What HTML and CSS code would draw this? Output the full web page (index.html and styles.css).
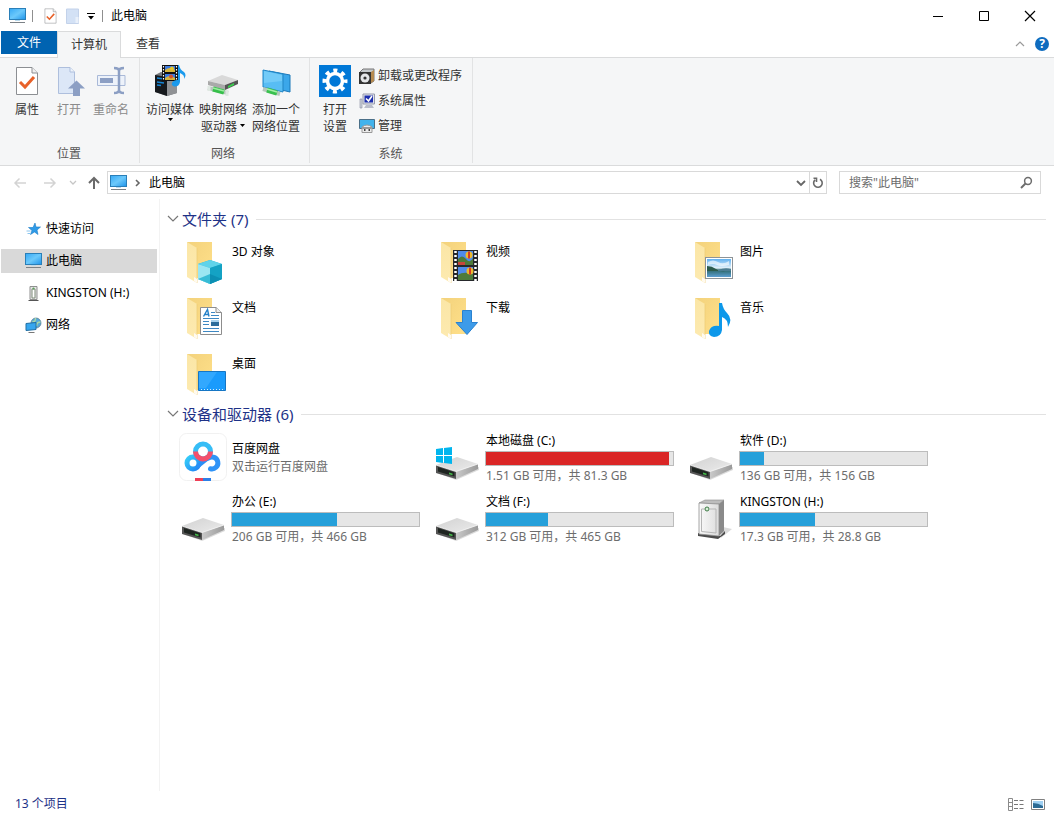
FILE: index.html
```html
<!DOCTYPE html>
<html lang="zh-CN">
<head>
<meta charset="utf-8">
<title>此电脑</title>
<link rel="stylesheet" href="styles.css">
</head>
<body>
<svg class="defs" aria-hidden="true">
  <defs>
    <linearGradient id="screen" x1="0" y1="0" x2="1" y2="1"><stop offset="0" stop-color="#35a8f5"/><stop offset=".5" stop-color="#6cc9fb"/><stop offset="1" stop-color="#1d93ea"/></linearGradient>
    <linearGradient id="back" x1="0" y1="0" x2="1" y2="1"><stop offset="0" stop-color="#f3d27c"/><stop offset="1" stop-color="#ffe08a"/></linearGradient>
    <linearGradient id="flap" x1="0" y1="0" x2="0" y2="1"><stop offset="0" stop-color="#fbe6a6"/><stop offset="1" stop-color="#fdeab0"/></linearGradient>
    <linearGradient id="metal" x1="0" y1="0" x2="1" y2="1"><stop offset="0" stop-color="#d2d2d2"/><stop offset="1" stop-color="#ebebeb"/></linearGradient>
    <linearGradient id="side" x1="0" y1="0" x2="1" y2="0"><stop offset="0" stop-color="#c9c9c9"/><stop offset="1" stop-color="#9a9a9a"/></linearGradient>
    <linearGradient id="sky" x1="0" y1="0" x2="0" y2="1"><stop offset="0" stop-color="#5fb0ee"/><stop offset=".5" stop-color="#e3f2fb"/><stop offset=".62" stop-color="#2f6a6e"/><stop offset="1" stop-color="#5d9fd2"/></linearGradient>
    <linearGradient id="tower" x1="0" y1="0" x2="1" y2="0"><stop offset="0" stop-color="#fafafa"/><stop offset="1" stop-color="#dcdcdc"/></linearGradient>
    <linearGradient id="ringL" x1="0" y1="0" x2="1" y2="1"><stop offset="0" stop-color="#35cdf8"/><stop offset="1" stop-color="#2286f5"/></linearGradient>
  </defs>
  <symbol id="pc" viewBox="0 0 17 16">
    <rect x=".5" y=".5" width="16" height="11" fill="url(#screen)" stroke="#2a7fb8"/>
    <path d="M6 12.500h5" stroke="#b9d9ec"/><path d="M1 14.500H16" stroke="#7b8186"/>
  </symbol>
  <symbol id="folder" viewBox="0 0 48 48">
    <path d="M8 4H33V40H14Z" fill="url(#back)"/>
    <path d="M8 4L18 10V45L8 39Z" fill="url(#flap)"/>
    <path d="M18 10V45" stroke="#eccb74" stroke-width=".7"/>
    <path d="M15 39l3 2v4l-3-2z" fill="#fffaf0"/>
  </symbol>
  <symbol id="drive" viewBox="0 0 48 48">
    <path d="M4 40L23 47L46 37V34Z" fill="#b9b9b9" opacity=".5"/>
    <path d="M3 32L24 24L45 31L23 38.500Z" fill="url(#metal)"/>
    <path d="M23 38.500L45 31V36L23 46Z" fill="url(#side)"/>
    <path d="M3 32L23 38.500V46L3 40Z" fill="#555"/>
    <path d="M5 34L21.500 39.300V43.500L5 38.500Z" fill="#1f2521"/>
    <path d="M16 39.500l3.500 1v1.800l-3.500-1z" fill="#44b649"/>
    <path d="M3 32L23 38.500L45 31" fill="none" stroke="#f7f7f7" stroke-width=".8"/>
  </symbol>
  <symbol id="picture" viewBox="0 0 28 22">
    <rect x=".5" y=".5" width="27" height="21" fill="#fff" stroke="#8d9397"/>
    <rect x="2" y="2" width="24" height="18" fill="url(#sky)"/>
    <path d="M2 9Q7 9 11 12T20 14L2 14Z" fill="#2c5b4c"/><path d="M13 13Q20 10 26 12V14H13Z" fill="#4c7d92"/>
    <path d="M3 5q5-3 10 0t11-1v4q-8 2-12 0t-9 0z" fill="#fff" opacity=".6"/>
  </symbol>
  <symbol id="propdoc" viewBox="0 0 24 30">
    <path d="M1.500 1.500H17L22.500 7V28.500H1.500Z" fill="#fff" stroke="#8c8f93"/>
    <path d="M17 1.500V7H22.500" fill="#f0f0f0" stroke="#8c8f93"/>
    <path d="M5 16L10 21L19 11" fill="none" stroke="#e8622a" stroke-width="3"/>
  </symbol>
</svg>

<header class="titlebar">
  <svg class="pc" width="17" height="16"><use href="#pc"/></svg>
  <span class="sep"></span>
  <button class="quick" aria-label="属性"><svg width="13" height="16"><use href="#propdoc"/></svg></button>
  <button class="quick" aria-label="新建文件夹"><svg width="14" height="16" viewBox="0 0 14 16"><path d="M.5 1H12.500V15.500H.5Z" fill="#d3e1f5" stroke="#c3d2ea"/><path d="M9.500 9h3v6h-3z" fill="#e9f0fa"/></svg></button>
  <button class="quick" aria-label="自定义快速访问工具栏"><svg width="8" height="8" viewBox="0 0 8 8"><path d="M0 1.500H8" stroke="#000"/><path d="M1 4H7L4 7.500Z"/></svg></button>
  <span class="sep"></span>
  <h1 class="title">此电脑</h1>
  <div class="controls">
    <button aria-label="最小化"><svg width="12" height="12" viewBox="0 0 12 12"><path d="M1 6.500H11" stroke="#000"/></svg></button>
    <button aria-label="最大化"><svg width="12" height="12" viewBox="0 0 12 12"><path d="M1.500 1.500H10.500V10.500H1.500Z" fill="none" stroke="#000"/></svg></button>
    <button aria-label="关闭"><svg width="12" height="12" viewBox="0 0 12 12"><path d="M1 1L11 11M11 1L1 11" stroke="#000" stroke-width="1.200"/></svg></button>
  </div>
</header>

<nav class="tabs">
  <button class="tab file">文件</button>
  <button class="tab active">计算机</button>
  <button class="tab">查看</button>
  <div class="tab-tools">
    <button aria-label="最小化功能区"><svg width="10" height="8" viewBox="0 0 10 8"><path d="M1 6L5 2L9 6" fill="none" stroke="#9a9a9a" stroke-width="1.200"/></svg></button>
    <button class="help" aria-label="帮助">?</button>
  </div>
</nav>

<section class="ribbon">
  <div class="group location">
    <div class="tools">
      <button class="big"><svg width="32" height="32" viewBox="0 0 32 32"><use href="#propdoc" x="4" y="1" width="24" height="30"/></svg>属性</button>
      <button class="big" disabled><svg width="32" height="32" viewBox="0 0 32 32"><path d="M5.500 2.500H17L21.500 7V28.500H5.500Z" fill="#dce7f7" stroke="#aebfdd"/><path d="M17 2.500V7H21.500" fill="#edf3fb" stroke="#aebfdd"/><path d="M23.500 15.500L32 23.500H27V31H20V23.500H15Z" fill="#8c9fc4"/></svg>打开</button>
      <button class="big" disabled><svg width="32" height="32" viewBox="0 0 32 32"><path d="M2.500 10.500H30V20.500H2.500Z" fill="#edf2fa" stroke="#a9b9d8"/><path d="M5 13H18V18H5Z" fill="#8c9fc4"/><path d="M19 3q5 0 5 3V25q0 3-5 3M29 3q-5 0-5 3V25q0 3 5 3" fill="none" stroke="#8c9fc4" stroke-width="2.500"/></svg>重命名</button>
    </div>
    <div class="caption">位置</div>
  </div>
  <div class="group network">
    <div class="tools">
      <button class="big"><svg width="34" height="32" viewBox="0 0 34 32"><path d="M2 10L8 7L24 9V28L14 31L2 27Z" fill="#77797c"/><path d="M2 10L14 12V31L2 27Z" fill="#16191d"/><path d="M14 12L24 9V28L14 31Z" fill="#909295"/><path d="M4 13l7 1M4 17l7 1M4 20l4 .6" stroke="#1687d8" stroke-width="1.500"/><path d="M9 0H25V16H9Z" fill="#111"/><path d="M12 1H22V7H12ZM12 9H22V15H12Z" fill="#3e7ce0"/><path d="M12 5q5-4 10 0v2H12zM12 13q5-4 10 0v2H12z" fill="#d5b43c"/><circle cx="19" cy="3.500" r="2" fill="#e7c72c"/><circle cx="18" cy="11.500" r="2" fill="#d7532a"/><path d="M10.500 1V16M23.500 1V16" stroke="#fff" stroke-width="1.200" stroke-dasharray="1.500 1.500"/><path d="M26 0q1 5 5 7 3 3 0 7 1-4-4-6V17q-1 5-6 4.500-4-2-1-5 2-2 5-1.500V0Z" fill="#1a9aed"/></svg>访问媒体<svg class="drop" width="5" height="3" viewBox="0 0 5 3"><path d="M0 0H5L2.500 3Z"/></svg></button>
      <button class="big mid"><svg width="34" height="32" viewBox="0 0 34 32"><path d="M2 16L16 10L32 15L19 20Z" fill="#d9d9d9"/><path d="M2 16L19 20V25L2 20Z" fill="#a9a9a9"/><path d="M19 20L32 15V19L19 25Z" fill="#555"/><path d="M22 21l6-3v2l-6 3z" fill="#37d04c"/><path d="M2 23L22 28" stroke="#b8c4bd" stroke-width="4"/><path d="M7 24L18 27" stroke="#36bf4b" stroke-width="5"/><path d="M7 23L18 26" stroke="#9bed9f" stroke-width="1.500"/><path d="M3 21v5M21 25v6" stroke="#dfe8e2" stroke-width="3"/></svg>映射网络<span>驱动器 <svg class="inline" width="5" height="3" viewBox="0 0 5 3"><path d="M0 0H5L2.500 3Z"/></svg></span></button>
      <button class="big"><svg width="32" height="32" viewBox="0 0 32 32"><path d="M9 6L30 10V27L9 22Z" fill="#3ba7ea" stroke="#1b78b9"/><path d="M3 5L23 9V27L3 22Z" fill="#58bdf4" stroke="#2185c5"/><path d="M4 6L22 10V16L4 18Z" fill="#86d3fa" opacity=".6"/><path d="M3 24L20 29" stroke="#b5c7bb" stroke-width="4"/><path d="M7 25L17 28" stroke="#39c14e" stroke-width="5"/><path d="M7 24L17 27" stroke="#a3efa7" stroke-width="1.500"/></svg>添加一个<span>网络位置</span></button>
    </div>
    <div class="caption">网络</div>
  </div>
  <div class="group system">
    <div class="tools">
      <button class="big"><svg width="32" height="32" viewBox="0 0 32 32"><path d="M0 0H32V32H0Z" fill="#0078d7"/><circle cx="16" cy="16" r="7.500" fill="none" stroke="#fff" stroke-width="3.500"/><circle cx="16" cy="16" r="10.500" fill="none" stroke="#fff" stroke-width="4" stroke-dasharray="4 4.247" stroke-dashoffset="2"/></svg>打开<span>设置</span></button>
      <div class="stack">
        <button class="small"><svg width="16" height="16" viewBox="0 0 16 16"><path d="M1 4L4 1H15V13L12 15Z" fill="#c5c9cc" stroke="#777"/><path d="M12 4l3-2v11l-3 2z" fill="#b58a4f"/><path d="M0 4H12V16H0Z" fill="#333"/><circle cx="6" cy="10" r="4.500" fill="#e4e6e8"/><circle cx="6" cy="10" r="1.600" fill="#333"/></svg>卸载或更改程序</button>
        <button class="small"><svg width="16" height="16" viewBox="0 0 16 16"><path d="M1 6H3V15H1Z" fill="#cfd3dc" stroke="#858ba0" stroke-width=".6"/><path d="M4 1H15.500V11H4Z" fill="#e1e3ea" stroke="#969bad"/><path d="M5.500 2.500H14V9.500H5.500Z" fill="#1d2fae"/><path d="M7 5.500L9.500 8L13 3" fill="none" stroke="#fff" stroke-width="1.600"/><path d="M7 12H13L15 15H5Z" fill="#babecb"/></svg>系统属性</button>
        <button class="small"><svg width="16" height="16" viewBox="0 0 16 16"><path d="M.5 1.500H15.500V10.500H.5Z" fill="#42b3ec" stroke="#4a6f88"/><path d="M3 9Q8 5 13 9V14.500H3Z" fill="#ececec" stroke="#999"/><path d="M3.500 9.500H12.500V10.500H3.500ZM5 11h1.500v2H5zM9.500 11H11v2H9.500z" fill="#444"/></svg>管理</button>
      </div>
    </div>
    <div class="caption">系统</div>
  </div>
</section>

<div class="addressbar">
  <div class="history">
    <button aria-label="后退"><svg width="14" height="12" viewBox="0 0 14 12"><path d="M13 6H2M6.500 1.500L2 6L6.500 10.500" fill="none" stroke="#d3d3d3" stroke-width="1.500"/></svg></button>
    <button aria-label="前进"><svg width="14" height="12" viewBox="0 0 14 12"><path d="M1 6H12M7.500 1.500L12 6L7.500 10.500" fill="none" stroke="#d3d3d3" stroke-width="1.500"/></svg></button>
    <button class="recent" aria-label="最近浏览的位置"><svg width="8" height="6" viewBox="0 0 8 6"><path d="M1 1L4 4L7 1" fill="none" stroke="#c6c6c6" stroke-width="1.300"/></svg></button>
    <button class="up" aria-label="上移"><svg width="12" height="14" viewBox="0 0 12 14"><path d="M6 13V2M1 7L6 2L11 7" fill="none" stroke="#6a6a6a" stroke-width="2"/></svg></button>
  </div>
  <div class="path">
    <svg width="17" height="16"><use href="#pc"/></svg>
    <svg width="6" height="8" viewBox="0 0 6 8"><path d="M1 1L4 4L1 7" fill="none" stroke="#666" stroke-width="1.600"/></svg>
    <button class="crumb">此电脑</button>
    <button class="pick" aria-label="以前的位置"><svg width="10" height="8" viewBox="0 0 10 8"><path d="M1 2L5 6L9 2" fill="none" stroke="#666" stroke-width="1.800"/></svg></button>
    <button class="refresh" aria-label="刷新"><svg width="12" height="12" viewBox="0 0 12 12"><path d="M8 2.200A4.300 4.300 0 1 1 3 2.800M1.500 1.200H4.500V5" fill="none" stroke="#6a6a6a" stroke-width="1.600"/></svg></button>
  </div>
  <div class="search">
    <input type="text" aria-label="搜索" placeholder='搜索"此电脑"'>
    <svg width="13" height="13" viewBox="0 0 13 13"><circle cx="8" cy="5" r="3.400" fill="none" stroke="#6d6d6d" stroke-width="1.500"/><path d="M5.500 7.500L1 12" stroke="#6d6d6d" stroke-width="2"/></svg>
  </div>
</div>

<div class="body">
  <nav class="side">
    <a href="#quick"><svg width="16" height="16" viewBox="0 0 16 16"><path d="M9.500 2l1 4H15L11.500 9 12.500 13.500 9 11 5 13.500 6.500 9.500 3 6.500h4.500z" fill="#2f9be8" stroke="#1a7cc7" stroke-width=".6"/><path d="M1 10h4M2 12.500h3" stroke="#8cc6ef"/></svg>快速访问</a>
    <a href="#pc-root" class="selected"><svg width="17" height="16"><use href="#pc"/></svg>此电脑</a>
    <a href="#kingston"><svg width="16" height="16" viewBox="0 0 16 16"><path d="M4.500 1.500H11.500V14.500H4.500Z" fill="#e6e6e6" stroke="#8f8f8f"/><path d="M6.500 4h3v9h-3z" fill="#fff" stroke="#7d8a78"/><path d="M3 15.500H13" stroke="#555"/><circle cx="8" cy="3.500" r="1" fill="#57a057"/></svg>KINGSTON (H:)</a>
    <a href="#network"><svg width="16" height="16" viewBox="0 0 16 16"><circle cx="10.500" cy="6" r="5" fill="#58a9d8" stroke="#55788e" stroke-width=".7"/><path d="M7 4q3 2 3-3M11 9q0-4 4-4" stroke="#a8d8a8" fill="none" stroke-width="1.500"/><path d="M.5 6.500L10.500 5.500V12.500L.5 13.500Z" fill="#36a6ee" stroke="#216fa3"/><path d="M3 15.500h6" stroke="#777"/></svg>网络</a>
  </nav>

  <main class="content">
    <section>
      <h2><svg width="12" height="8" viewBox="0 0 12 8"><path d="M1 1L6 6L11 1" fill="none" stroke="#777" stroke-width="1.200"/></svg>文件夹 (7)</h2>
      <div class="grid folders">
        <a class="tile" href="#3d"><svg class="icon" viewBox="0 0 48 48"><use href="#folder"/><path d="M19 26L31 22L43 26V41L31 46L19 41Z" fill="#1fb4d2"/><path d="M19 26L31 22L43 26L31 30Z" fill="#5fd3ea"/><path d="M19 26L31 30V46L19 41Z" fill="#9be6f2"/><path d="M19 41L31 36V46Z" fill="#38bcd6"/><path d="M31 30L43 26V41L31 46Z" fill="#14a2c4"/><path d="M31 36L43 41L31 46Z" fill="#0c8fb3"/></svg><span>3D 对象</span></a>
        <a class="tile" href="#videos"><svg class="icon" viewBox="0 0 48 48"><use href="#folder"/><path d="M20 12H45V43H20Z" fill="#26282b"/><path d="M25 13H40V27H25ZM25 29H40V42H25Z" fill="#4f8bea"/><path d="M25 21q4-5 8 0t7-1v7H25zM25 37q5-4 15-1v6H25z" fill="#4e7b3a"/><circle cx="36" cy="17" r="3.500" fill="#edb92d"/><path d="M35 13.500h2v7h-2z" fill="#d63b26"/><circle cx="37" cy="33" r="3.500" fill="#edb92d"/><path d="M36 29.500h2v7h-2z" fill="#d63b26"/><path d="M25 24h7v3h-7z" fill="#c7463b"/><path d="M22.500 13V43M42.500 13V43" stroke="#fff" stroke-width="2.500" stroke-dasharray="2 2"/></svg><span>视频</span></a>
        <a class="tile" href="#pictures"><svg class="icon" viewBox="0 0 48 48"><use href="#folder"/><use href="#picture" x="18" y="19" width="28" height="22"/></svg><span>图片</span></a>
        <a class="tile" href="#documents"><svg class="icon" viewBox="0 0 48 48"><use href="#folder"/><path d="M21.500 13.500H37L42.500 18.500V40.500H21.500Z" fill="#fff" stroke="#8d8d8d"/><path d="M37 13.500V18.500H42.500" fill="#eee" stroke="#8d8d8d"/><path d="M24.500 22.500L28.500 15.500L30 22.500M26 20.500h4" fill="none" stroke="#2380c8" stroke-width="1.400"/><path d="M32 18.500h4M32 21.500h8M24 24.500H40M24 27.500h6M24 30.500h6M24 34.500H40M24 37.500H40" stroke="#3e88c3"/><path d="M32 26H40V32H32Z" fill="#2e6d9b"/><path d="M32 26h8v2h-8z" fill="#a9d3ee"/></svg><span>文档</span></a>
        <a class="tile" href="#downloads"><svg class="icon" viewBox="0 0 48 48"><use href="#folder"/><path d="M29.500 16.500H38.500V28.500H44.500L34 40.500L23 28.500H29.500Z" fill="#3d9be9" stroke="#2a82d0"/></svg><span>下载</span></a>
        <a class="tile" href="#music"><svg class="icon" viewBox="0 0 48 48"><use href="#folder"/><path d="M32 9H35Q36 15 40 19Q46 25 41 33Q41 25 35 23V36Q34 43 27 43Q21 42 22 37Q24 31 32 32Z" fill="#0d98ea"/></svg><span>音乐</span></a>
        <a class="tile" href="#desktop"><svg class="icon" viewBox="0 0 48 48"><use href="#folder"/><path d="M19.500 21.500H46.500V40.500H19.500Z" fill="#1a9bfc" stroke="#1676c4"/><path d="M20 22H38L27 38H20Z" fill="#43b0ff" opacity=".6"/><path d="M22 39.500H45" stroke="#d4ecff" stroke-dasharray="1 2"/></svg><span>桌面</span></a>
      </div>
    </section>

    <section>
      <h2><svg width="12" height="8" viewBox="0 0 12 8"><path d="M1 1L6 6L11 1" fill="none" stroke="#777" stroke-width="1.200"/></svg>设备和驱动器 (6)</h2>
      <div class="grid drives">
        <a class="tile app" href="#baidu"><svg class="icon" viewBox="0 0 48 48"><rect x=".5" y=".5" width="47" height="47" rx="7" fill="#fff" stroke="#f1f1f1"/><circle cx="24" cy="18.500" r="7.500" fill="none" stroke="#36bdf6" stroke-width="5"/><circle cx="14" cy="30" r="6" fill="none" stroke="url(#ringL)" stroke-width="5"/><path d="M29.500 25A6 6 0 1 1 31.500 35.800" fill="none" stroke="#2f93f7" stroke-width="5" stroke-linecap="round"/><path d="M18 34L28 26" stroke="#2b8ef6" stroke-width="4"/><path d="M16.500 18.500A7.500 7.500 0 0 0 31.500 18.500" fill="none" stroke="#f3506c" stroke-width="5"/><path d="M16 45H26V48H16Z" fill="#ef3f56"/><path d="M24 45H32V48H24Z" fill="#2c7fe6"/></svg><div class="info"><span>百度网盘</span><small>双击运行百度网盘</small></div></a>
        <a class="tile" href="#c"><svg class="icon" viewBox="0 0 48 48"><use href="#drive"/><path d="M3 16L10 15V22H3ZM11 15L19 14V22H11ZM3 23H10V30L3 29ZM11 23H19V31L11 30Z" fill="#00b5ee"/></svg><div class="info"><span>本地磁盘 (C:)</span><div class="bar full" role="progressbar" aria-label="C: 已用空间" aria-valuenow="98"><i style="width:98%"></i></div><small>1.51 GB 可用，共 81.3 GB</small></div></a>
        <a class="tile" href="#d"><svg class="icon" viewBox="0 0 48 48"><use href="#drive"/></svg><div class="info"><span>软件 (D:)</span><div class="bar" role="progressbar" aria-label="D: 已用空间" aria-valuenow="13"><i style="width:13%"></i></div><small>136 GB 可用，共 156 GB</small></div></a>
        <a class="tile" href="#e"><svg class="icon" viewBox="0 0 48 48"><use href="#drive"/></svg><div class="info"><span>办公 (E:)</span><div class="bar" role="progressbar" aria-label="E: 已用空间" aria-valuenow="56"><i style="width:56%"></i></div><small>206 GB 可用，共 466 GB</small></div></a>
        <a class="tile" href="#f"><svg class="icon" viewBox="0 0 48 48"><use href="#drive"/></svg><div class="info"><span>文档 (F:)</span><div class="bar" role="progressbar" aria-label="F: 已用空间" aria-valuenow="33"><i style="width:33%"></i></div><small>312 GB 可用，共 465 GB</small></div></a>
        <a class="tile" href="#h"><svg class="icon" viewBox="0 0 48 48"><path d="M34 44L45 35L36 33Z" fill="#ccc" opacity=".7"/><path d="M11 39L33 42L38 37V40L31 45L11 42Z" fill="#4c4c4c"/><path d="M12 9L18 6H37L32 10Z" fill="#bdbdbd" stroke="#8b8b8b" stroke-width=".6"/><path d="M12 9L32 10V42L12 40Z" fill="url(#tower)" stroke="#909090" stroke-width=".8"/><path d="M32 10L37 6V37L32 42Z" fill="#8a8a8a"/><path d="M14.500 15H17.500M23 15H29V39L14.500 37.500V15" fill="none" stroke="#b5b5b5"/><circle cx="20" cy="15" r="2" fill="#d7eed7" stroke="#3d7a45"/></svg><div class="info"><span>KINGSTON (H:)</span><div class="bar" role="progressbar" aria-label="H: 已用空间" aria-valuenow="40"><i style="width:40%"></i></div><small>17.3 GB 可用，共 28.8 GB</small></div></a>
      </div>
    </section>
  </main>
</div>

<footer class="status">
  <span>13 个项目</span>
  <div class="views">
    <button aria-label="详细信息"><svg width="16" height="13" viewBox="0 0 16 13"><path d="M.5 .5H4.500V12.500H.5ZM.5 4.500H4.500M.5 8.500H4.500" fill="#fff" stroke="#8a8a8a"/><path d="M6 2.500h4M11.500 2.500h4M6 6.500h4M11.500 6.500h4M6 10.500h4M11.500 10.500h4" stroke="#777"/></svg></button>
    <button aria-label="大图标"><svg width="14" height="11" viewBox="0 0 14 11"><path d="M.5 .5H13.500V10.500H.5Z" fill="#fff" stroke="#808080"/><path d="M2 2H12V9H2Z" fill="#9fd0f2"/><path d="M2 4q5 0 10 3v2H2z" fill="#2b6a94"/></svg></button>
  </div>
</footer>
</body>
</html>
```
FILE: styles.css
```css
* { box-sizing: border-box; }

body {
  margin: 0;
  min-height: 100vh;
  display: flex;
  flex-direction: column;
  background: #fff;
  color: #000;
  font: 12px/18px "Noto Sans", "Noto Sans CJK SC", sans-serif;
}

button {
  border: 0;
  padding: 0;
  margin: 0;
  background: none;
  color: inherit;
  font: inherit;
}

a { color: inherit; text-decoration: none; }
svg { flex: none; }
.defs { position: absolute; width: 0; height: 0; }

/* Title bar */
.titlebar { display: flex; align-items: center; height: 31px; padding-left: 9px; }
.titlebar .sep { width: 1px; height: 12px; background: #8f8f8f; }
.titlebar .pc { margin-right: 6px; }
.quick { display: flex; align-items: center; margin-left: 11px; }
.quick + .sep { margin: 0 8px 0 7px; }
.quick + .quick { margin-left: 9px; }
.quick:nth-of-type(3) { margin-left: 7px; }
.title { margin: 0; font-size: 12px; font-weight: 400; }
.controls { display: flex; margin-left: auto; padding-right: 1px; }
.controls button { width: 46px; height: 30px; display: grid; place-items: center; }

/* Ribbon tabs */
.tabs { display: flex; height: 27px; padding-left: 1px; border-bottom: 1px solid #dadbdc; }
.tab { width: 54px; height: 26px; color: #333; }
.tab.file { width: 56px; height: 23px; background: #0063b1; color: #fff; }
.tab.active { width: 64px; height: 27px; background: #f5f6f7; border: 1px solid #dadbdc; border-bottom: 0; }
.tab-tools { display: flex; align-items: center; gap: 10px; margin-left: auto; padding-right: 5px; }
.tab-tools button { display: flex; }
.tab-tools .help {
  width: 14px;
  height: 14px;
  border-radius: 7px;
  background: #0f6cbf;
  color: #fff;
  font-weight: 700;
  line-height: 14px;
  justify-content: center;
}

/* Ribbon */
.ribbon { display: flex; height: 108px; padding-bottom: 2px; background: #f5f6f7; border-bottom: 1px solid #dadbdc; color: #333; }
.group { display: flex; flex-direction: column; justify-content: space-between; border-right: 1px solid #e2e3e4; }
.location { padding: 0 7px 0 6px; }
.network { padding: 0 7px 0 4px; }
.system { padding: 0 5px 0 4px; }
.tools { display: flex; padding-top: 7px; }
.caption { text-align: center; color: #555; }
.big { display: flex; flex-direction: column; align-items: center; width: 42px; line-height: 17px; white-space: nowrap; }
.big svg:first-child { margin-bottom: 4px; }
.network .big { width: 52px; }
.network .mid { width: 54px; }
.big:disabled { color: #8b8b8b; }
.inline { vertical-align: middle; }
.stack { display: flex; flex-direction: column; gap: 7px; margin: 0 5px 0 3px; padding-top: 2px; }
.small { display: flex; align-items: center; gap: 3px; }

/* Address bar */
.addressbar { display: flex; align-items: center; height: 33px; padding-right: 13px; }
.history { display: flex; align-items: center; gap: 16px; width: 107px; padding-left: 13px; }
.history button { display: flex; }
.history .recent { margin-left: -4px; }
.history .up { margin-left: -5px; }
.path { flex: 1; display: flex; align-items: center; height: 23px; padding-left: 2px; gap: 8px; border: 1px solid #d9d9d9; }
.crumb { margin-right: auto; }
.path .pick { display: flex; margin-right: -5px; }
.path .refresh { display: grid; place-items: center; width: 17px; height: 21px; border-left: 1px solid #d9d9d9; }
.search { display: flex; align-items: center; width: 202px; height: 23px; margin-left: 12px; padding: 0 7px 0 9px; border: 1px solid #d9d9d9; }
.search input { flex: 1; min-width: 0; border: 0; padding: 0; outline: 0; background: none; font: inherit; }
.search input::placeholder { color: #6d6d6d; }

/* Body */
.body { flex: 1; display: flex; }
.side { display: flex; flex-direction: column; gap: 8px; width: 160px; padding: 18px 2px 0 1px; border-right: 1px solid #f3f3f3; }
.side a { display: flex; align-items: center; height: 24px; padding-left: 24px; }
.side svg { width: 17px; margin-right: 4px; }
.side .selected { background: #d9d9d9; }

.content { flex: 1; padding: 10px 8px 0 7px; }
.content h2 { display: flex; align-items: center; margin: 0; color: #1e3287; font-size: 15px; line-height: 20px; font-weight: 400; }
.content h2 svg { margin-right: 3px; }
.content h2::after { content: ""; flex: 1; height: 1px; margin-left: 8px; background: #e2e2e2; }
.grid { display: grid; grid-template-columns: repeat(auto-fill, 254px); padding-left: 12px; }
.tile { display: flex; gap: 5px; }
.icon { width: 48px; height: 48px; }
.folders { row-gap: 8px; padding-top: 9px; padding-bottom: 6px; }
.folders span { padding-top: 5px; }
.drives { row-gap: 8px; padding-top: 8px; }
.drives .icon { margin-top: 1px; }
.info { display: flex; flex-direction: column; width: 189px; }
.info small { font-size: 12px; color: #6d6d6d; }
.app .info { padding-top: 8px; }
.bar { width: 189px; height: 15px; margin: 1px 0 1px -1px; border: 1px solid #bcbcbc; background: #e6e6e6; }
.bar i { display: block; height: 100%; background: #26a0da; }
.bar.full i { background: #da2626; }

/* Status bar */
.status { display: flex; align-items: center; justify-content: space-between; height: 26px; padding: 0 9px 0 15px; color: #1e3287; }
.views { display: flex; align-items: center; gap: 7px; }
.views button { display: flex; }
```
